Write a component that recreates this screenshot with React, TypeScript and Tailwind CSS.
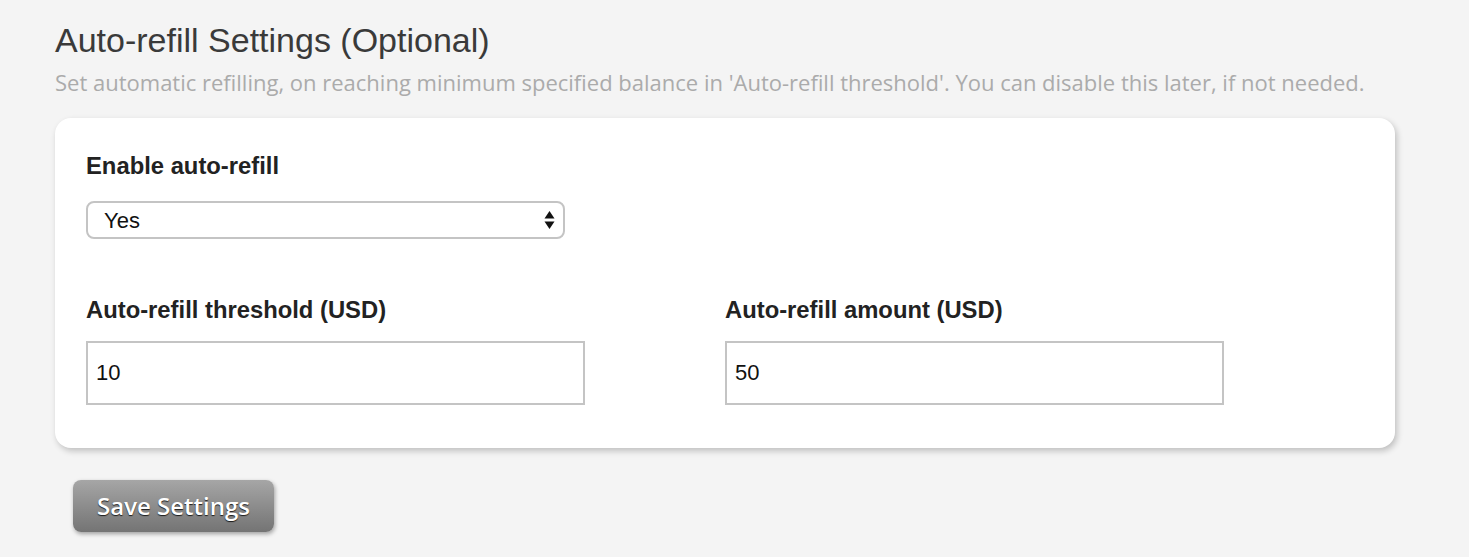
import React from 'react';

const sans = { fontFamily: '"Liberation Sans", Arial, sans-serif' };
const open = { fontFamily: '"Open Sans", "Noto Sans", sans-serif' };

const Field: React.FC<{ label: string; value: string }> = ({ label, value }) => (
  <div>
    <label className="block text-[23.8px] leading-[28px] font-bold text-[#222]">{label}</label>
    <input
      defaultValue={value}
      className="mt-[17px] block w-[499px] h-[64px] border-2 border-[#c4c4c4] bg-white px-[8px] text-[22px] text-[#111] outline-none"
      style={sans}
    />
  </div>
);

export default function App() {
  return (
    <div className="min-h-[557px] bg-[#f4f4f4] pl-[55px] pr-[74px] pt-[20px]" style={sans}>
      <h1 className="text-[34px] leading-[40px] text-[#3a3a3a] font-normal">Auto-refill Settings (Optional)</h1>
      <p className="mt-[9px] text-[22px] leading-[26px] text-[#ababab] whitespace-nowrap" style={open}>
        Set automatic refilling, on reaching minimum specified balance in 'Auto-refill threshold'. You can disable this later, if not needed.
      </p>

      {/* settings card */}
      <div className="mt-[23px] bg-white rounded-[16px] shadow-[2px_3px_6px_rgba(0,0,0,0.22)] pl-[31px] pt-[34px] pb-[43px]">
        <label className="block text-[23.8px] leading-[28px] font-bold text-[#222]">Enable auto-refill</label>
        <div className="relative mt-[21px] w-[479px]">
          <select
            defaultValue="yes"
            className="block w-full h-[38px] appearance-none rounded-[8px] border-2 border-[#c4c4c4] bg-white pl-[16px] text-[22px] text-[#111] outline-none"
            style={sans}
          >
            <option value="yes">Yes</option>
            <option value="no">No</option>
          </select>
          <svg className="pointer-events-none absolute right-[10px] top-[10px]" width="11" height="18" viewBox="0 0 11 18">
            <path d="M5.5 0 L10.5 7.5 H0.5 Z" fill="#111" />
            <path d="M5.5 18 L10.5 10.5 H0.5 Z" fill="#111" />
          </svg>
        </div>

        <div className="mt-[57px] grid grid-cols-[639px_1fr]">
          <Field label="Auto-refill threshold (USD)" value="10" />
          <Field label="Auto-refill amount (USD)" value="50" />
        </div>
      </div>

      <button
        className="mt-[32px] ml-[18px] w-[201px] h-[52px] rounded-[8px] bg-gradient-to-b from-[#a6a6a6] to-[#747474] text-white text-[24px] font-semibold shadow-[1px_2px_4px_rgba(0,0,0,0.35)] [text-shadow:0_1px_1px_rgba(0,0,0,0.8)]"
        style={open}
      >
        Save Settings
      </button>
    </div>
  );
}
